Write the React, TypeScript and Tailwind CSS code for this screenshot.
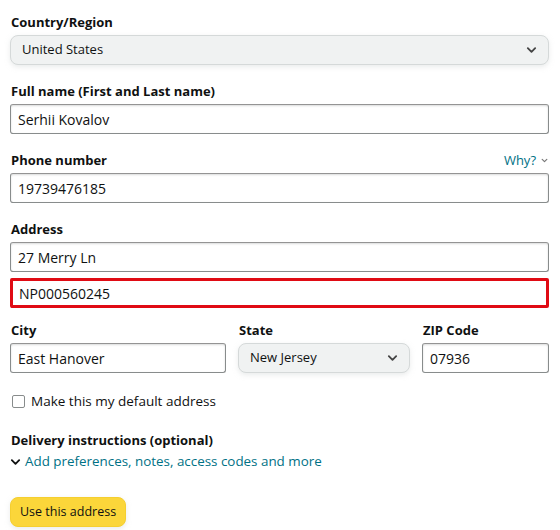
import React from 'react';

const inputCls =
  'block w-full h-[30px] px-[7px] rounded-[3px] border border-[#888c8c] border-t-[#949494] bg-white text-[14px] text-[#0f1111] shadow-[inset_0_1px_2px_rgba(15,17,17,0.15)] outline-none';

const labelCls = 'block h-[19px] mb-[3px] pl-px text-[13px] leading-[19px] font-bold text-[#0f1111]';

function Chevron({ className }: { className?: string }) {
  return (
    <svg className={className} viewBox="0 0 12 8" fill="none" stroke="currentColor" strokeWidth="2" strokeLinecap="round" strokeLinejoin="round">
      <path d="M2 2l4 4 4-4" />
    </svg>
  );
}

function Dropdown({ value, className }: { value: string; className?: string }) {
  return (
    <div
      className={`flex items-center justify-between h-[30px] pl-[11px] pr-[11px] rounded-[8px] border border-[#d5d9d9] bg-[#f0f2f2] text-[13px] text-[#0f1111] shadow-[0_2px_5px_0_rgba(213,217,217,0.5)] ${className ?? ''}`}
    >
      <span>{value}</span>
      <Chevron className="w-[11px] h-[8px] text-[#444]" />
    </div>
  );
}

export default function App() {
  return (
    <div className="w-[560px] h-[530px] bg-white pl-[10px] pr-[11px] pt-[13px] overflow-hidden" style={{ fontFamily: '"Open Sans", "Noto Sans", Arial, sans-serif' }}>
      {/* Country */}
      <div className="mb-[17px]">
        <label className={labelCls}>Country/Region</label>
        <Dropdown value="United States" />
      </div>

      {/* Full name */}
      <div className="mb-[17px]">
        <label className={labelCls}>Full name (First and Last name)</label>
        <input className={inputCls} defaultValue="Serhii Kovalov" />
      </div>

      {/* Phone */}
      <div className="mb-[17px]">
        <div className="flex items-center justify-between">
          <label className={labelCls}>Phone number</label>
          <span className="flex items-center gap-[5px] mb-[3px] text-[13px] leading-[19px] text-[#007185]">
            Why?
            <Chevron className="w-[7px] h-[5px] text-[#777] mr-px" />
          </span>
        </div>
        <input className={inputCls} defaultValue="19739476185" />
      </div>

      {/* Address */}
      <div className="mb-[13px]">
        <label className={labelCls}>Address</label>
        <input className={inputCls} defaultValue="27 Merry Ln" />
        <input
          className="block w-full h-[30px] mt-[6px] px-[6px] rounded-[2px] border-[3px] border-[#e00b14] bg-white text-[14px] text-[#0f1111] outline-none"
          defaultValue="NP000560245"
        />
      </div>

      {/* City / State / ZIP */}
      <div className="flex gap-[12px] mb-[19px]">
        <div className="w-[216px]">
          <label className={labelCls}>City</label>
          <input className={inputCls} defaultValue="East Hanover" />
        </div>
        <div className="w-[172px]">
          <label className={labelCls}>State</label>
          <Dropdown value="New Jersey" />
        </div>
        <div className="w-[127px]">
          <label className={labelCls}>ZIP Code</label>
          <input className={inputCls} defaultValue="07936" />
        </div>
      </div>

      {/* Default checkbox */}
      <label className="flex items-center gap-[6px] h-[19px] pl-[2px] text-[13.5px] text-[#0f1111]">
        <span className="w-[13px] h-[13px] rounded-[2px] border border-[#888c8c] bg-white" />
        Make this my default address
      </label>

      {/* Delivery instructions */}
      <div className="mt-[20px]">
        <div className="h-[19px] pl-px text-[13px] leading-[19px] font-bold text-[#0f1111]">Delivery instructions (optional)</div>
        <div className="flex items-center gap-[4px] mt-[2px] h-[19px] text-[13.4px] text-[#007185]">
          <Chevron className="w-[11px] h-[8px] text-[#0f1111]" />
          Add preferences, notes, access codes and more
        </div>
      </div>

      <button className="mt-[26px] h-[30px] px-[9px] rounded-[8px] border border-[#f5cf30] bg-[#fbd63a] text-[12.5px] text-[#0f1111] shadow-[0_2px_5px_0_rgba(213,217,217,0.5)]">
        Use this address
      </button>
    </div>
  );
}
